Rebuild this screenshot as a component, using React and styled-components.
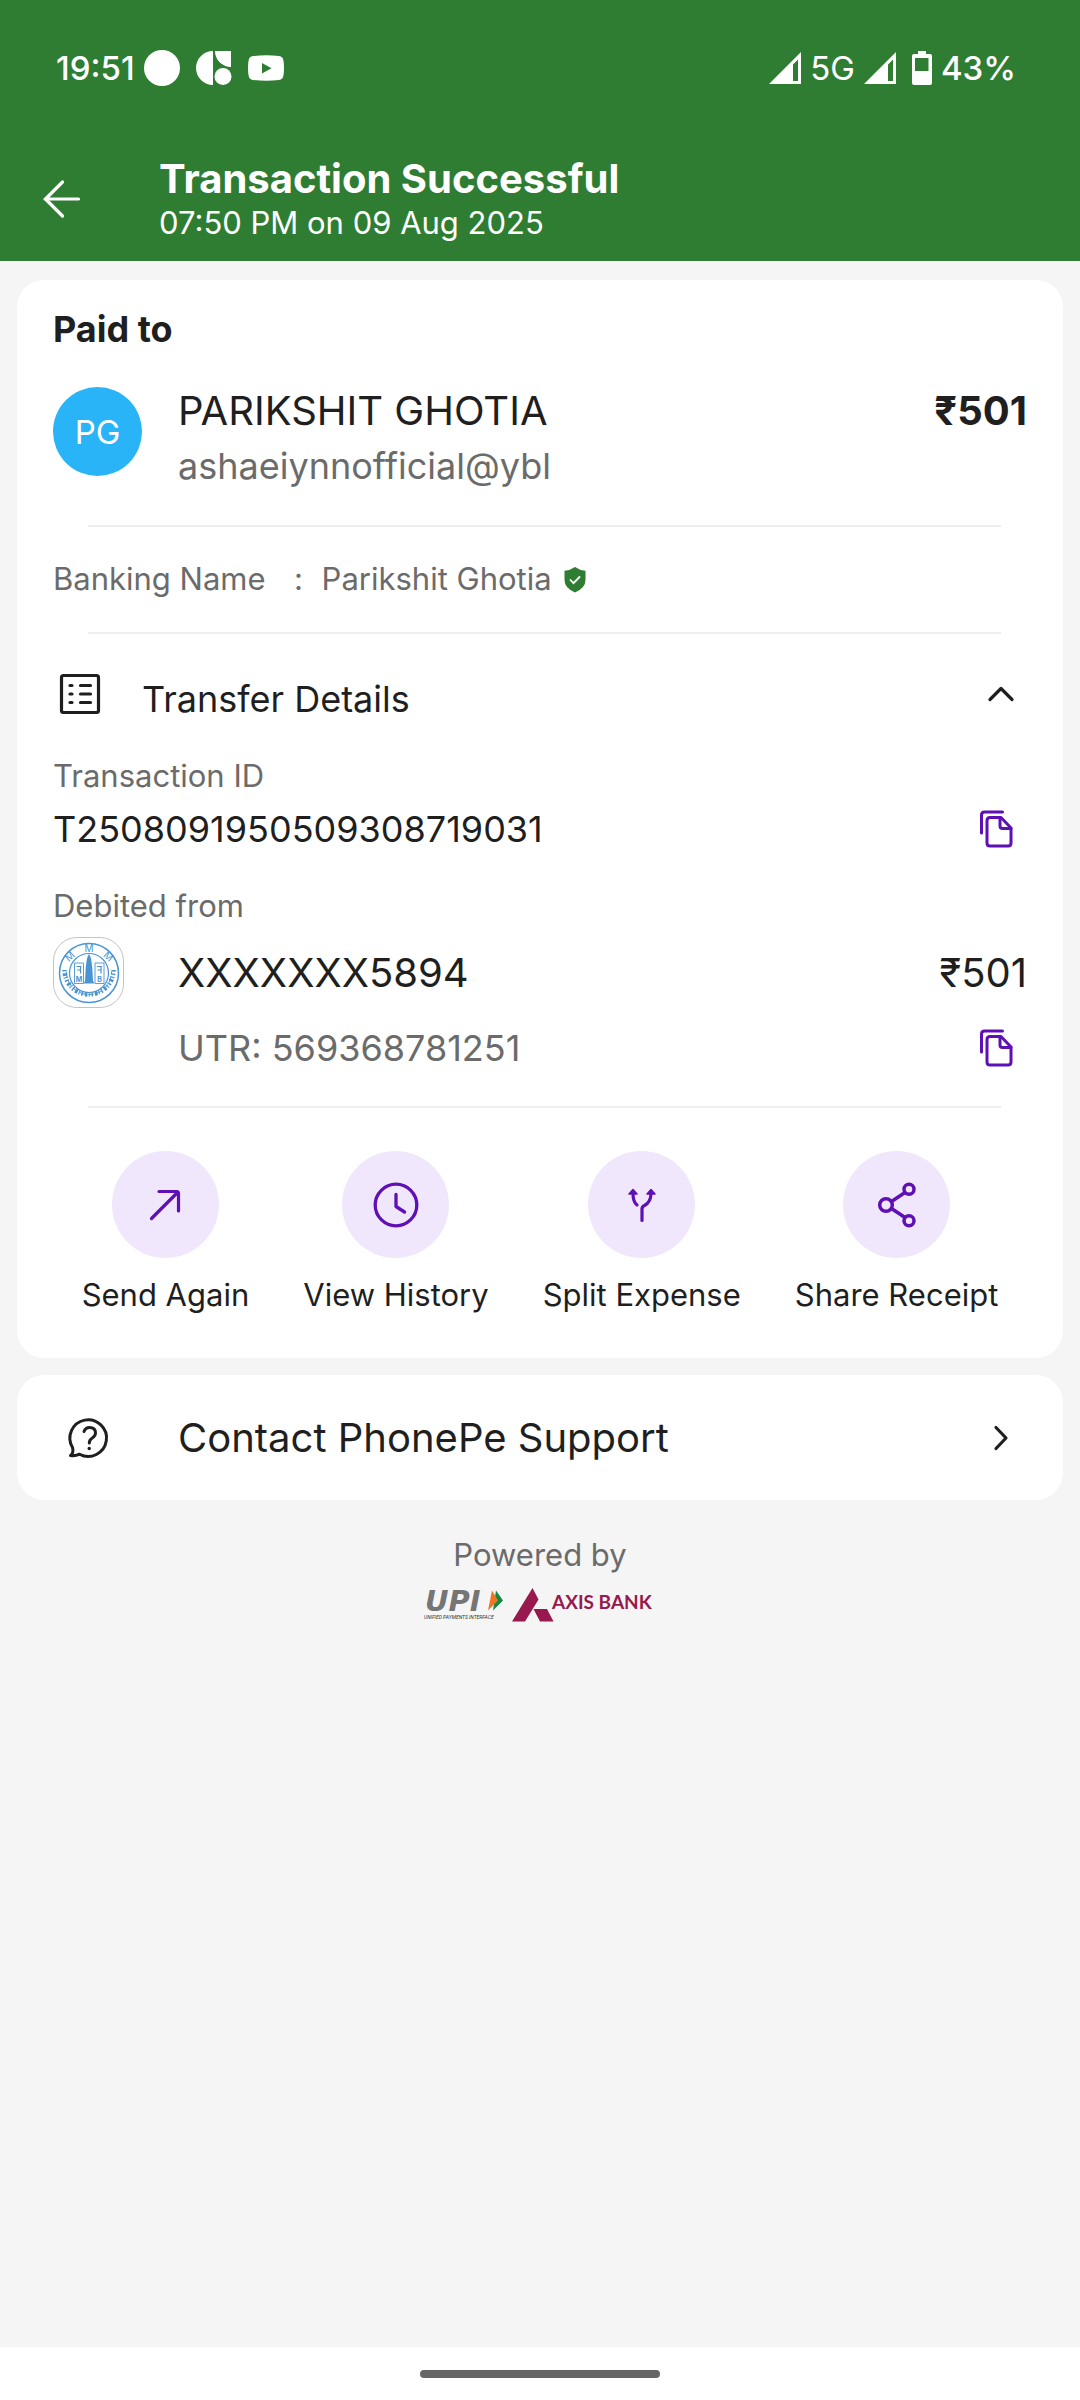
import React, { useState } from "react";
import styled, { createGlobalStyle } from "styled-components";

const color = {
  green: "#2f7d32",
  page: "#f5f5f5",
  card: "#ffffff",
  ink: "#1f1f1f",
  muted: "#6b6b6b",
  line: "#eeeeee",
  purple: "#5f10b5",
  lilac: "#f1e7fc",
  avatar: "#29b4f7",
  bankBlue: "#4a94d4",
  axis: "#97194d",
};

const GlobalStyle = createGlobalStyle`
  *, *::before, *::after { box-sizing: border-box; }
  body {
    margin: 0;
    background: ${color.page};
    color: ${color.ink};
    font-family: Inter, "Noto Sans", sans-serif;
  }
  h1, h2, h3, p { margin: 0; }
  svg { display: block; flex: none; overflow: visible; }
`;

const Page = styled.div`
  min-height: 100vh;
  display: flex;
  flex-direction: column;
`;

const Header = styled.header`
  background: ${color.green};
  color: #fff;
`;

const StatusBar = styled.div`
  display: flex;
  justify-content: space-between;
  align-items: center;
  padding: 48px 64px 0 56px;
  height: 88px;
  font-size: 33px;
  font-weight: 500;
  line-height: 40px;
`;

const StatusGroup = styled.div`
  display: flex;
  align-items: center;
  gap: ${(p) => p.$gap}px;
`;

const Network = styled.span`
  font-weight: 400;
`;

const TitleBar = styled.div`
  display: flex;
  align-items: center;
  padding: 67px 36px 18px;
`;

const BackButton = styled.button`
  width: 123px;
  height: 88px;
  padding: 0 0 0 7px;
  border: 0;
  background: none;
  color: inherit;
  display: flex;
  align-items: center;
`;

const Title = styled.h1`
  font-size: 40px;
  font-weight: 700;
  line-height: 48px;
`;

const Subtitle = styled.p`
  font-size: 31px;
  line-height: 40px;
`;

const Main = styled.main`
  flex: 1;
  display: flex;
  flex-direction: column;
  gap: 17px;
  padding: 19px 17px;
`;

const Card = styled.section`
  background: ${color.card};
  border-radius: 27px;
  padding: 27px 36px 43px;
`;

const Divider = styled.hr`
  height: 2px;
  margin: ${(p) => p.$top}px 26px ${(p) => p.$bottom}px 35px;
  border: 0;
  background: ${color.line};
`;

const SectionTitle = styled.h2`
  font-size: 36px;
  font-weight: 700;
  line-height: 44px;
  margin-bottom: 36px;
`;

const Row = styled.div`
  display: flex;
  align-items: ${(p) => p.$align || "center"};
  margin-top: ${(p) => p.$top || 0}px;
`;

const Leading = styled.div`
  width: 125px;
  flex: none;
`;

const Grow = styled.div`
  flex: 1;
  min-width: 0;
`;

const Avatar = styled.div`
  width: 89px;
  height: 89px;
  border-radius: 50%;
  background: ${color.avatar};
  color: #fff;
  display: grid;
  place-items: center;
  font-size: 33px;
`;

const Large = styled.p`
  font-size: 40px;
  line-height: 48px;
  font-weight: ${(p) => (p.$bold ? 700 : 400)};
`;

const Medium = styled.p`
  font-size: 36px;
  line-height: 44px;
  color: ${(p) => (p.$muted ? color.muted : color.ink)};
`;

const Handle = styled(Medium)`
  margin-top: 9px;
`;

const Small = styled.p`
  font-size: 31px;
  line-height: 40px;
  margin-top: ${(p) => p.$top || 0}px;
  color: ${color.muted};
`;

const BankingName = styled.div`
  display: flex;
  align-items: center;
`;

const Colon = styled(Small)`
  width: 56px;
  padding-left: 10px;
  text-align: center;
`;

const Shield = styled.svg`
  margin-left: 12px;
`;

const Toggle = styled.button`
  display: flex;
  align-items: flex-start;
  width: 100%;
  padding: 0;
  border: 0;
  background: none;
  color: inherit;
  font: inherit;
  font-size: 36px;
  line-height: 54px;
  text-align: left;
`;

const IconSlot = styled.span`
  width: ${(p) => p.$width}px;
  height: 44px;
  flex: none;
  display: grid;
  place-items: center;
`;

const ToggleLabel = styled.span`
  flex: 1;
  padding-left: 36px;
`;

const CopyButton = styled.button`
  width: 62px;
  height: 44px;
  padding: 0;
  border: 0;
  background: none;
  color: ${color.purple};
  display: grid;
  place-items: center;
`;

const BankBadge = styled.div`
  width: 71px;
  height: 71px;
  border: 1px solid #c4c4c8;
  border-radius: 24px;
  display: grid;
  place-items: center;
`;

const Actions = styled.div`
  display: flex;
  justify-content: center;
  gap: 54px;
`;

const Action = styled.button`
  padding: 0;
  border: 0;
  background: none;
  color: inherit;
  font: inherit;
  font-size: 31px;
  line-height: 40px;
  display: flex;
  flex-direction: column;
  align-items: center;
  gap: 17px;
`;

const ActionIcon = styled.span`
  width: 107px;
  height: 107px;
  border-radius: 50%;
  background: ${color.lilac};
  color: ${color.purple};
  display: grid;
  place-items: center;
`;

const SupportLink = styled.a`
  display: flex;
  align-items: center;
  min-height: 125px;
  padding: 0 36px;
  border-radius: 27px;
  background: ${color.card};
  color: inherit;
  text-decoration: none;
  font-size: 40px;
  line-height: 48px;
`;

const Powered = styled.footer`
  display: flex;
  flex-direction: column;
  align-items: center;
  gap: 13px;
  padding-top: 18px;
`;

const Logos = styled.div`
  display: flex;
  align-items: center;
  gap: 8px;
`;

const NavBar = styled.div`
  height: 53px;
  background: #fff;
  display: grid;
  place-items: center;
`;

const NavHandle = styled.div`
  width: 240px;
  height: 8px;
  border-radius: 4px;
  background: #666;
`;

const stroke = {
  fill: "none",
  stroke: "currentColor",
  strokeLinecap: "round",
  strokeLinejoin: "round",
};

const DotIcon = () => (
  <svg width="36" height="36" viewBox="0 0 36 36" aria-hidden="true">
    <circle cx="18" cy="18" r="18" fill="currentColor" />
  </svg>
);

const ShapesIcon = () => (
  <svg width="36" height="36" viewBox="0 0 36 36" fill="currentColor" aria-hidden="true">
    <path d="M17 1v34A17 17 0 0 1 17 1Z" />
    <path d="M19 1h16v16A16 16 0 0 1 19 1Z" />
    <circle cx="27" cy="26.500" r="8.500" />
  </svg>
);

const VideoIcon = () => (
  <svg width="36" height="36" viewBox="0 0 36 36" aria-hidden="true">
    <path fill="currentColor" d="M5 6Q18 4.500 31 6Q35 6.500 35.500 11Q36.500 18 35.500 25Q35 29.500 31 30Q18 31.500 5 30Q1 29.500 .5 25Q-.5 18 .5 11Q1 6.500 5 6Z" />
    <path fill={color.green} d="M14 13v10.500l9.500-5.250Z" />
  </svg>
);

const SignalIcon = () => (
  <svg width="32" height="34" viewBox="0 0 32 34" aria-hidden="true">
    <path fill="currentColor" fillRule="evenodd" d="M32 1v32H0ZM29 8.500L24 13.500V30h5Z" />
  </svg>
);

const BatteryIcon = () => (
  <svg width="20" height="34" viewBox="0 0 20 34" aria-hidden="true">
    <path fill="currentColor" fillRule="evenodd" d="M6 0h8v3h4q2 0 2 2v27q0 2-2 2H2q-2 0-2-2V5q0-2 2-2h4ZM3 7v13h13.500V7Z" />
  </svg>
);

const BackIcon = () => (
  <svg width="38" height="38" viewBox="0 0 38 38" strokeWidth="3.200" {...stroke} aria-hidden="true">
    <path d="M35.500 19H2M19.500 2L2.500 19l17 17" />
  </svg>
);

const ListIcon = () => (
  <svg width="40" height="40" viewBox="0 0 40 40" strokeWidth="3.200" {...stroke} aria-hidden="true">
    <rect x="1.500" y="1.500" width="37" height="37" rx="2" />
    <path d="M10 11.500h2M20.500 11.500h10M10 20h2M20.500 20h10M10 28.500h2M20.500 28.500h10" />
  </svg>
);

const ChevronUp = () => (
  <svg width="28" height="18" viewBox="0 0 28 18" strokeWidth="3.200" {...stroke} aria-hidden="true">
    <path d="M3 14.500l11-11 11 11" />
  </svg>
);

const ChevronRight = () => (
  <svg width="18" height="28" viewBox="0 0 18 28" strokeWidth="3.200" {...stroke} aria-hidden="true">
    <path d="M4 3.500L14 14 4 24.500" />
  </svg>
);

const CopyIcon = () => (
  <svg width="34" height="38" viewBox="0 0 34 38" strokeWidth="3" {...stroke} aria-hidden="true">
    <path d="M2.500 23V5q0-3 3-3h18" />
    <path d="M22 7.500H11Q8 7.500 8 10.500V33q0 3 3 3h18q3 0 3-3V18Z" />
    <path d="M21 8v8q0 2.500 2.500 2.500H32" />
  </svg>
);

const SendIcon = () => (
  <svg width="46" height="46" viewBox="0 0 46 46" strokeWidth="3.200" {...stroke} aria-hidden="true">
    <path d="M9.500 36.500L36 10M17 9.500h17.500q2 0 2 2V29" />
  </svg>
);

const ClockIcon = () => (
  <svg width="46" height="46" viewBox="0 0 46 46" strokeWidth="3.300" {...stroke} aria-hidden="true">
    <circle cx="23" cy="23" r="20.800" />
    <path d="M23 12.500v12l8.500 5.500" />
  </svg>
);

const SplitIcon = () => (
  <svg width="46" height="46" viewBox="0 0 46 46" strokeWidth="3.200" {...stroke} aria-hidden="true">
    <path d="M23 38.500V27q0-2.500 2.500-3.500Q32 20 32 11M14 11q0 9 4 12" />
    <path fill="currentColor" strokeWidth="1.500" d="M14 7.500l4 4.500h-8ZM32 7.500l4 4.500h-8Z" />
  </svg>
);

const ShareIcon = () => (
  <svg width="46" height="46" viewBox="0 0 46 46" strokeWidth="3.500" {...stroke} aria-hidden="true">
    <circle cx="12" cy="23" r="6.300" />
    <circle cx="35" cy="7.300" r="5" />
    <circle cx="35" cy="38.700" r="5" />
    <path d="M17.500 19.500L31 10.500M17.500 26.500L31 35.500" />
  </svg>
);

const SupportIcon = () => (
  <svg width="42" height="42" viewBox="0 0 42 42" strokeWidth="3" {...stroke} aria-hidden="true">
    <path d="M2.500 38.500Q6 36 4.500 30.500A18.300 18.300 0 1 1 11.500 37.200Q7 39.500 2.500 38.500Z" />
    <path d="M16 14.500q1.500-4 5.500-4 6 0 6 5.500 0 3-3.500 5.200-2.700 1.600-2.700 4.800" />
    <circle cx="21.200" cy="31.500" r="1" fill="currentColor" strokeWidth="1.500" />
  </svg>
);

const BankEmblem = () => (
  <svg width="62" height="62" viewBox="0 0 62 62" fill="none" stroke={color.bankBlue} role="img" aria-label="Bank of Maharashtra">
    <circle cx="31" cy="31" r="29.500" strokeWidth="1.500" />
    <circle cx="31" cy="31" r="19.500" strokeWidth="1.200" />
    <path d="M6.500 28A24.500 24.500 0 0 0 55.500 28" strokeWidth="4.500" strokeDasharray="1.400 2 2.600 1.400 1 1.800" />
    <path d="M8.500 30A22.500 22.500 0 0 0 53.500 30" strokeWidth="1" strokeDasharray="6 2.500" />
    <g fill={color.bankBlue} stroke="none" fontFamily="Inter, sans-serif" fontSize="10">
      <text x="31" y="10" textAnchor="middle">M</text>
      <text x="14" y="17" textAnchor="middle" transform="rotate(-42 14 17)">M</text>
      <text x="48" y="17" textAnchor="middle" transform="rotate(42 48 17)">M</text>
      <g fontSize="7" fontWeight="700">
        <text x="21" y="40" textAnchor="middle">M</text>
        <text x="41.500" y="40" textAnchor="middle">B</text>
      </g>
    </g>
    <path d="M16.500 21h9v20.500h-9zM37 21h9v20.500h-9z" strokeWidth=".9" />
    <path d="M18.500 24.500h5M22.500 24.500v7M19 28h3.500M39 24.500h5M43 24.500v7M39.500 28h3.500" strokeWidth="1.200" />
    <path fill={color.bankBlue} stroke="none" d="M31 12l1.500 3 .8 3 1 8 .7 13 1.500 2.500h-11l1.500-2.500.7-13 1-8 .8-3Z" />
  </svg>
);

const UpiLogo = () => (
  <svg width="80" height="34" viewBox="0 0 80 34" role="img" aria-label="UPI Unified Payments Interface">
    <text x="1" y="23" fontFamily="'DejaVu Sans', sans-serif" fontSize="29" fontWeight="700" fontStyle="italic" fill="#757575">UPI</text>
    <path fill="#138842" d="M72 2.500l7 10-10 10Z" />
    <path fill="#ee7623" d="M68 2.500l6 10-10 10Z" />
    <text x="0" y="31" fontFamily="Roboto, sans-serif" fontSize="5" fontStyle="italic" fill="#333">UNIFIED PAYMENTS INTERFACE</text>
  </svg>
);

const AxisLogo = () => (
  <svg width="144" height="34" viewBox="0 0 144 34" role="img" aria-label="Axis Bank">
    <path fill={color.axis} d="M20.500 0l6 11.500L13 33.500H0ZM21.500 21h13.500l6.500 12.500H28Z" />
    <text x="40" y="21" fontFamily="Lato, sans-serif" fontSize="19" fontWeight="700" fill={color.axis}>AXIS BANK</text>
  </svg>
);

const actions = [
  { label: "Send Again", Icon: SendIcon },
  { label: "View History", Icon: ClockIcon },
  { label: "Split Expense", Icon: SplitIcon },
  { label: "Share Receipt", Icon: ShareIcon },
];

export default function App() {
  const [open, setOpen] = useState(true);

  return (
    <Page>
      <GlobalStyle />
      <Header>
        <StatusBar>
          <StatusGroup $gap={16}>
            <StatusGroup $gap={9}>
              <span>19:51</span>
              <DotIcon />
            </StatusGroup>
            <ShapesIcon />
            <VideoIcon />
          </StatusGroup>
          <StatusGroup $gap={16}>
            <StatusGroup $gap={9}>
              <SignalIcon />
              <Network>5G</Network>
              <SignalIcon />
            </StatusGroup>
            <StatusGroup $gap={9}>
              <BatteryIcon />
              <span>43%</span>
            </StatusGroup>
          </StatusGroup>
        </StatusBar>
        <TitleBar>
          <BackButton type="button" aria-label="Back">
            <BackIcon />
          </BackButton>
          <Grow>
            <Title>Transaction Successful</Title>
            <Subtitle>07:50 PM on 09 Aug 2025</Subtitle>
          </Grow>
        </TitleBar>
      </Header>

      <Main>
        <Card>
          <SectionTitle>Paid to</SectionTitle>
          <Row $align="flex-start">
            <Leading>
              <Avatar>PG</Avatar>
            </Leading>
            <Grow>
              <Large>PARIKSHIT GHOTIA</Large>
              <Handle $muted>ashaeiynnofficial@ybl</Handle>
            </Grow>
            <Large $bold>₹501</Large>
          </Row>

          <Divider $top={37} $bottom={32} />
          <BankingName>
            <Small>Banking Name</Small>
            <Colon>:</Colon>
            <Small>Parikshit Ghotia</Small>
            <Shield width="22" height="26" viewBox="0 0 22 26" aria-label="Verified">
              <path fill={color.green} d="M11 1q5 3.500 10.500 3.800V14q0 8-10.500 12.500Q.5 22 .5 14V4.800Q6 4.500 11 1Z" />
              <path fill="none" stroke="#fff" strokeWidth="1.800" strokeLinecap="round" d="M6.500 14l3 3.200 6-6.200" />
            </Shield>
          </BankingName>
          <Divider $top={33} $bottom={38} />

          <Toggle type="button" aria-expanded={open} onClick={() => setOpen(!open)}>
            <IconSlot $width={53}>
              <ListIcon />
            </IconSlot>
            <ToggleLabel>Transfer Details</ToggleLabel>
            <IconSlot $width={53}>
              <ChevronUp />
            </IconSlot>
          </Toggle>

          {open && (
            <>
              <Small $top={30}>Transaction ID</Small>
              <Row $top={11}>
                <Grow>
                  <Medium>T2508091950509308719031</Medium>
                </Grow>
                <CopyButton type="button" aria-label="Copy transaction ID">
                  <CopyIcon />
                </CopyButton>
              </Row>
              <Small $top={35}>Debited from</Small>
              <Row $top={11}>
                <Leading>
                  <BankBadge>
                    <BankEmblem />
                  </BankBadge>
                </Leading>
                <Grow>
                  <Large>XXXXXXX5894</Large>
                </Grow>
                <Large>₹501</Large>
              </Row>
              <Row $top={18}>
                <Leading />
                <Grow>
                  <Medium $muted>UTR: 569368781251</Medium>
                </Grow>
                <CopyButton type="button" aria-label="Copy UTR">
                  <CopyIcon />
                </CopyButton>
              </Row>
            </>
          )}

          <Divider $top={36} $bottom={43} />
          <Actions>
            {actions.map(({ label, Icon }) => (
              <Action type="button" key={label}>
                <ActionIcon>
                  <Icon />
                </ActionIcon>
                <span>{label}</span>
              </Action>
            ))}
          </Actions>
        </Card>

        <SupportLink href="#support">
          <Leading>
            <IconSlot $width={71}>
              <SupportIcon />
            </IconSlot>
          </Leading>
          <Grow>Contact PhonePe Support</Grow>
          <IconSlot $width={53}>
            <ChevronRight />
          </IconSlot>
        </SupportLink>

        <Powered>
          <Small>Powered by</Small>
          <Logos>
            <UpiLogo />
            <AxisLogo />
          </Logos>
        </Powered>
      </Main>

      <NavBar>
        <NavHandle />
      </NavBar>
    </Page>
  );
}
